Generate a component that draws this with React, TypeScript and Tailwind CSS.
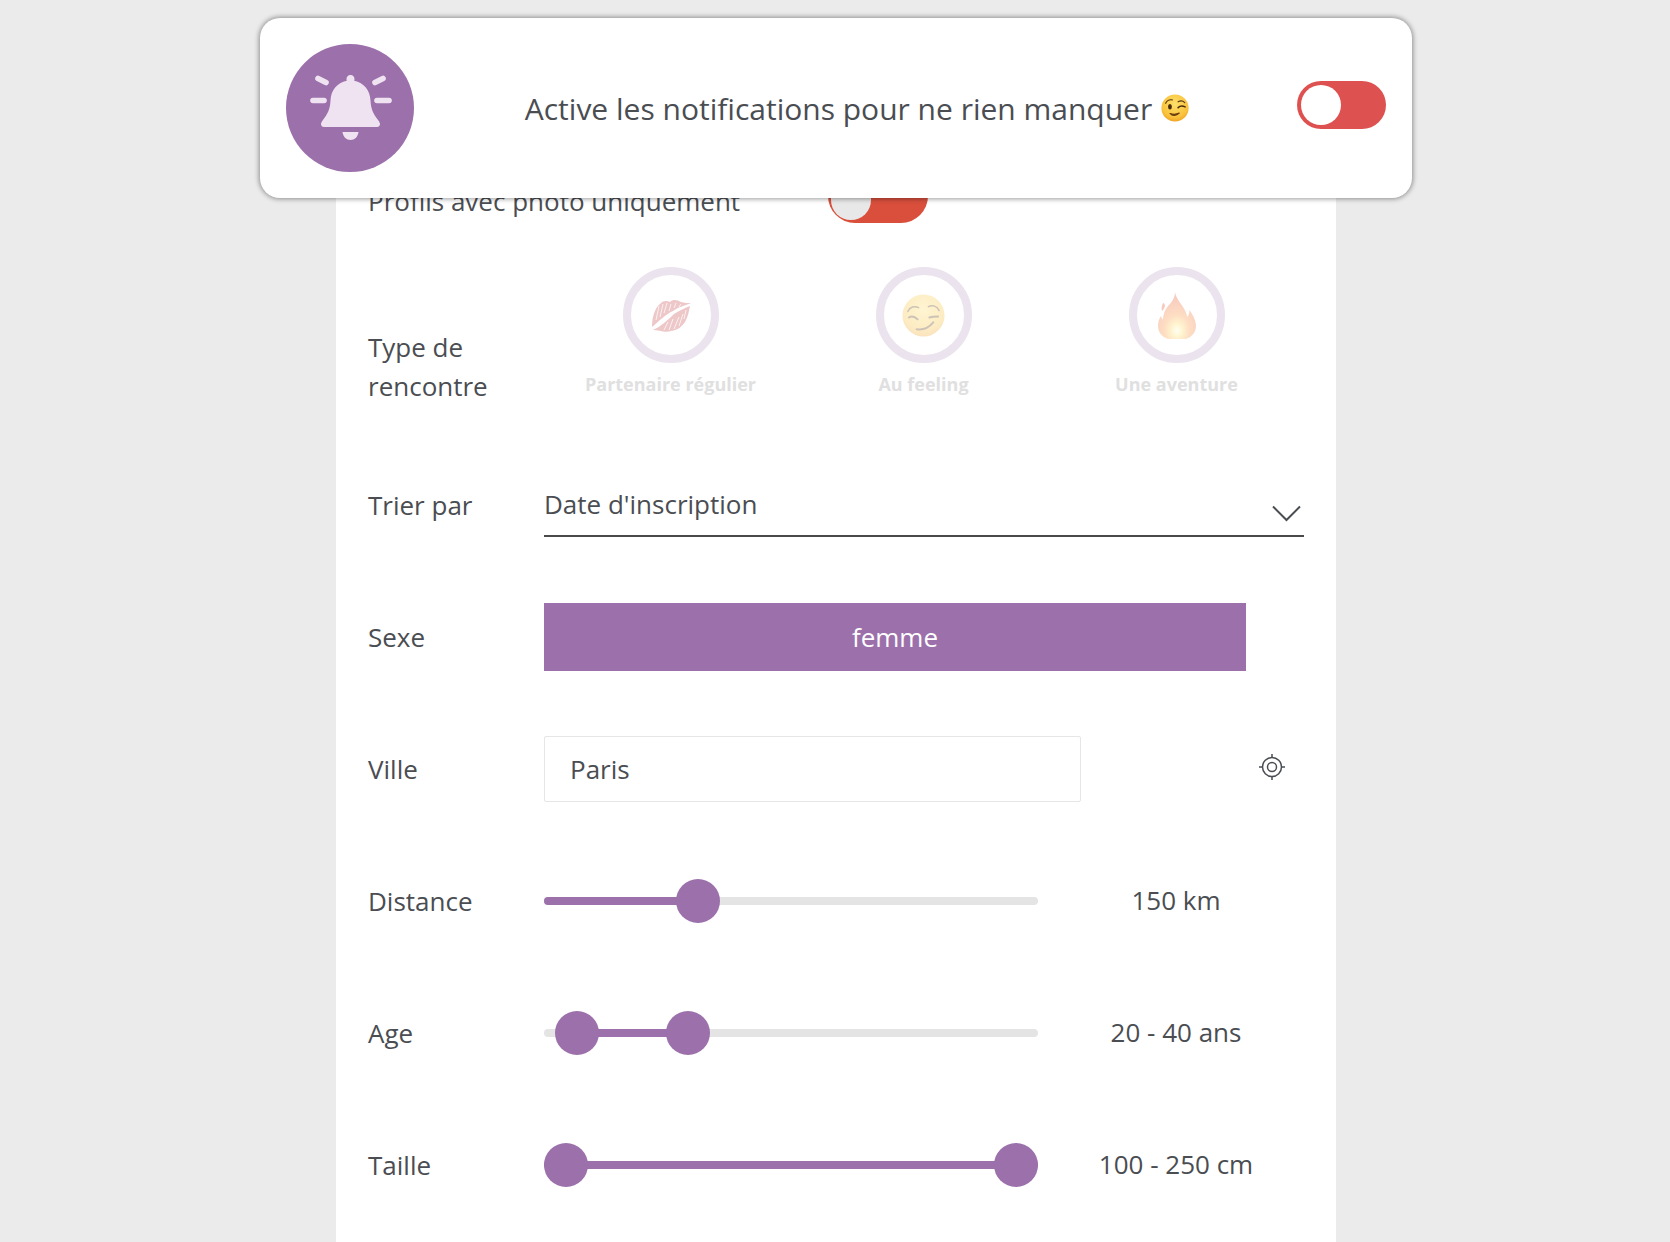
import React from "react";

const FONT = "font-['Open_Sans','Noto_Sans',sans-serif]";

function Bell() {
  return (
    <svg width="128" height="128" viewBox="0 0 128 128">
      <circle cx="64" cy="64" r="64" fill="#9c70ab" />
      <g fill="#f0e3f1">
        <path d="M64.5 31C67 31 68.5 33 68.5 35C68.5 35.600 68.400 36.200 68.200 36.700C78 38.700 84 46 84.500 56.500C84.900 65.500 87.500 70 92 76C93.500 78 94 79 94 80C94 82 92.700 83 91 83H38C36.300 83 35 82 35 80C35 79 35.500 78 37 76C41.500 70 44.100 65.500 44.500 56.500C45 46 51 38.700 60.800 36.700C60.600 36.200 60.500 35.600 60.500 35C60.500 33 62 31 64.500 31Z" />
        <path d="M56.500 88h16c-.6 5-4 8-8 8s-7.400-3-8-8z" />
      </g>
      <g stroke="#f0e3f1" strokeWidth="5.600" strokeLinecap="round">
        <path d="M32 34.500 40 38.500" />
        <path d="M97 34.500 89 38.500" />
        <path d="M27 56.500h11" />
        <path d="M91 56.500h12" />
      </g>
    </svg>
  );
}

function Wink() {
  return (
    <svg width="28" height="28" viewBox="0 0 36 36">
      <defs>
        <radialGradient id="wg" cx="50%" cy="35%" r="70%">
          <stop offset="0%" stopColor="#fde06a" />
          <stop offset="70%" stopColor="#f9c23c" />
          <stop offset="100%" stopColor="#ee9a1f" />
        </radialGradient>
      </defs>
      <circle cx="18" cy="18" r="17.500" fill="url(#wg)" />
      <path d="M6 12c1.500-3.500 5-5 8.500-4.500" stroke="#5b3a12" strokeWidth="1.500" fill="none" strokeLinecap="round" />
      <path d="M22 10c3-1.500 6.500-1 8.500 1" stroke="#5b3a12" strokeWidth="1.500" fill="none" strokeLinecap="round" />
      <ellipse cx="11.500" cy="16.500" rx="2.500" ry="3.500" fill="#4a2d10" />
      <path d="M22 17.500c2.500-2.500 6-2.500 9-1" stroke="#4a2d10" strokeWidth="2" fill="none" strokeLinecap="round" />
      <path d="M11.500 25c3 3.500 8 3.500 12-.5-3 1.500-8 2-12 .5z" fill="#6b3d10" stroke="#6b3d10" strokeWidth="1.400" strokeLinejoin="round" />
    </svg>
  );
}

function Kiss() {
  return (
    <svg width="40" height="36" viewBox="0 0 40 36">
      <g fill="#c9484f">
        <path d="M1 30C1 22 3 12 9 7C13 3 16 4 19 5C22 2 26 3 30 5C33 6 37 6 40 6C33 9 27 10 22 14C15 17 8 24 1 30Z" />
        <path d="M2 33C9 30 16 24 23 17C28 14 33 11 39 9C38 14 37 19 35 23C32 29 27 33 20 34C14 36 8 33 2 33Z" />
      </g>
      <g stroke="#fff" strokeWidth="1" opacity=".75">
        <path d="M8 9 5 23M12 7 9 20M16 6l-3 10M20 7l-2 7M25 6l-2 5M30 7l-2 3" />
        <path d="M13 33l4-8M18 33l4-11M23 32l5-12M28 29l4-12M33 22l2-9" />
      </g>
    </svg>
  );
}

function Smirk() {
  return (
    <svg width="43" height="43" viewBox="0 0 44 44">
      <defs>
        <radialGradient id="sg" cx="50%" cy="35%" r="70%">
          <stop offset="0%" stopColor="#fde06a" />
          <stop offset="70%" stopColor="#f9c23c" />
          <stop offset="100%" stopColor="#ee9a1f" />
        </radialGradient>
      </defs>
      <circle cx="22" cy="22" r="21.500" fill="url(#sg)" />
      <g stroke="#5b3a12" fill="none" strokeLinecap="round">
        <path d="M6 18c2-5 7-6 11-4" strokeWidth="1.500" />
        <path d="M27 13c4-2 9-1 11 4" strokeWidth="1.500" />
        <path d="M7 24c3-2 6-1 9 2" strokeWidth="2" />
        <path d="M28 24c3-1 6-1 9-1" strokeWidth="2" />
        <path d="M15 36c6 1 12-1 17-7" strokeWidth="2" />
      </g>
    </svg>
  );
}

function Fire() {
  return (
    <svg width="38" height="47" viewBox="0 0 38 47">
      <defs>
        <radialGradient id="fg" cx="50%" cy="82%" r="75%">
          <stop offset="0%" stopColor="#fffde0" />
          <stop offset="18%" stopColor="#ffe066" />
          <stop offset="45%" stopColor="#fb923c" />
          <stop offset="100%" stopColor="#e8502a" />
        </radialGradient>
      </defs>
      <path
        d="M17 0C18 6 22 10 25 15C27 18 29 22 29 25C31 23 31.500 21 31.500 18C35 23 38 29 38 34C38 40 34 45 28 47H10C4 45 0 40 0 34C0 30 1 27 3 24C3.500 26 4 27 5 27.500C5 22 7 18 10 14C14 10 17 6 17 0Z"
        fill="url(#fg)"
      />
      <path d="M5 11c-1 3-2 5-1 8 1-1 2-2 3-5 0-2-1-3-2-3z" fill="#e8502a" />
    </svg>
  );
}

function Choice({ icon, label }: { icon: React.ReactNode; label: string }) {
  return (
    <div className="w-[253px] flex flex-col items-center">
      <div className="w-24 h-24 rounded-full border-[8px] border-[#ebe3ee] flex items-center justify-center">
        <div className="opacity-30 flex items-center justify-center">{icon}</div>
      </div>
      <div className="mt-[8px] text-[18px] leading-[26px] font-bold text-[#e0e0e0] whitespace-nowrap">{label}</div>
    </div>
  );
}

function Row({ label, children, value }: { label: string; children: React.ReactNode; value?: string }) {
  return (
    <div className="h-[132px] flex items-center">
      <div className="w-[176px] shrink-0 text-[#4a4d52]">{label}</div>
      {children}
      {value && <div className="w-[276px] shrink-0 text-center text-[#4a4d52] whitespace-nowrap -translate-y-px">{value}</div>}
    </div>
  );
}

function Thumb({ className }: { className: string }) {
  return <div className={`absolute top-1/2 -translate-y-1/2 w-11 h-11 rounded-full bg-[#9c70ab] ${className}`} />;
}

function Slider({ fill, children }: { fill: string; children: React.ReactNode }) {
  return (
    <div className="relative shrink-0 w-[494px] h-2 rounded-full bg-[#e4e4e4]">
      <div className={`absolute top-0 h-2 rounded-full bg-[#9c70ab] ${fill}`} />
      {children}
    </div>
  );
}

export default function App() {
  return (
    <div className={`relative h-[1242px] overflow-hidden bg-[#ebebeb] ${FONT} text-[26px] leading-[39px]`}>
      <div className="absolute left-[260px] top-[18px] w-[1152px] h-[180px] z-10 bg-white rounded-[20px] shadow-[0_0_5px_1px_rgba(0,0,0,0.4)] flex items-center pl-[26px]">
        <div className="shrink-0">
          <Bell />
        </div>
        <div className="w-[834px] ml-[26px] flex items-center justify-center text-[30px] text-[#4a4d52] whitespace-nowrap">
          <span>Active les notifications pour ne rien manquer</span>
          <span className="ml-[9px] flex"><Wink /></span>
        </div>
        <div className="ml-[23px] w-[89px] h-12 rounded-full bg-[#dd5250] p-[4px] -translate-y-[3px]">
          <div className="w-10 h-10 rounded-full bg-white" />
        </div>
      </div>

      <div className="ml-[336px] mt-[30px] w-[1000px] h-[1212px] bg-white pl-8 pr-8 pt-[139px]">
        <div className="h-[54px] flex items-start">
          <div className="w-[460px] text-[#4a4d52] whitespace-nowrap mt-[13px]">Profils avec photo uniquement</div>
          <div className="w-[100px] h-[54px] rounded-full bg-[#d94f3c] p-[3px]">
            <div className="w-[40px] h-[48px] rounded-full bg-[#e8e8e8]" />
          </div>
        </div>

        <div className="mt-[44px] h-[172px] flex items-start">
          <div className="w-[176px] shrink-0 text-[#4a4d52] mt-[61px]">Type de<br />rencontre</div>
          <div className="flex">
            <Choice icon={<Kiss />} label="Partenaire régulier" />
            <Choice icon={<Smirk />} label="Au feeling" />
            <Choice icon={<Fire />} label="Une aventure" />
          </div>
        </div>

        <div className="h-[99px] mt-[33px] flex items-start">
          <div className="w-[176px] shrink-0 text-[#4a4d52] mt-[14px]">Trier par</div>
          <div className="w-[760px] h-[65px] border-b-2 border-[#4a4a4a] flex justify-between pt-[13px]">
            <span className="text-[#4a4d52]">Date d'inscription</span>
            <svg className="mt-[20px] mr-[3px]" width="29" height="17" viewBox="0 0 29 17" fill="none" stroke="#4a4d52" strokeWidth="2">
              <path d="M1 1.500 14.500 15 28 1.500" />
            </svg>
          </div>
        </div>

        <Row label="Sexe">
          <div className="w-[702px] h-[68px] bg-[#9c70ab] text-white flex items-center justify-center">femme</div>
        </Row>

        <Row label="Ville">
          <div className="w-[537px] h-[66px] border border-[#e6e6e6] rounded-[2px] flex items-center pl-[25px] text-[#4a4d52]">Paris</div>
          <svg className="ml-[178px] -translate-y-[2px]" width="26" height="26" viewBox="0 0 26 26" fill="none" stroke="#4a4d52" strokeWidth="1.500">
            <circle cx="13" cy="13" r="9.500" />
            <circle cx="13" cy="13" r="4.500" />
            <path d="M13 0v3.500M13 22.500V26M0 13h3.500M22.500 13H26" />
          </svg>
        </Row>

        <Row label="Distance" value="150 km">
          <Slider fill="left-0 w-[154px]">
            <Thumb className="left-[132px]" />
          </Slider>
        </Row>

        <Row label="Age" value="20 - 40 ans">
          <Slider fill="left-[33px] w-[111px]">
            <Thumb className="left-[11px]" />
            <Thumb className="left-[122px]" />
          </Slider>
        </Row>

        <Row label="Taille" value="100 - 250 cm">
          <Slider fill="left-0 w-[494px]">
            <Thumb className="left-0" />
            <Thumb className="left-[450px]" />
          </Slider>
        </Row>
      </div>
    </div>
  );
}
